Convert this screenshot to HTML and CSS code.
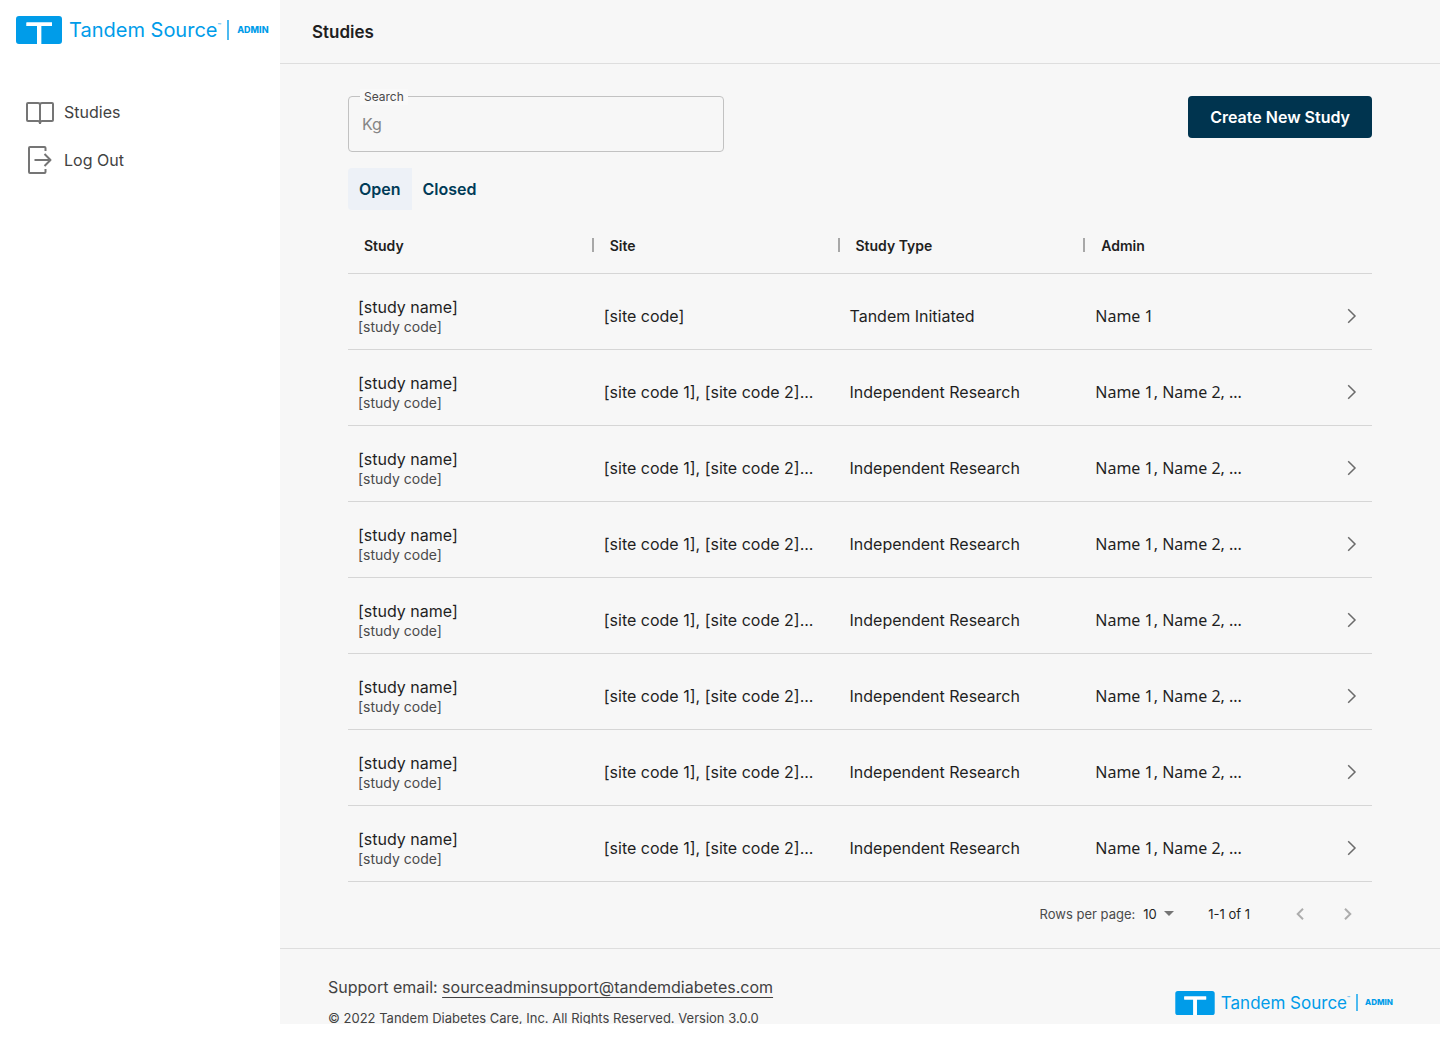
FILE: index.html
```
<!DOCTYPE html>
<html lang="en">
<head>
<meta charset="utf-8">
<meta name="viewport" content="width=device-width, initial-scale=1">
<title>Studies</title>
<link rel="stylesheet" href="styles.css">
</head>
<body>
<svg class="sprite" aria-hidden="true">
  <symbol id="mark" viewBox="0 0 46 28">
    <path fill="#009ce9" fill-rule="evenodd" d="M3 0H43a3 3 0 0 1 3 3V25a3 3 0 0 1-3 3H25.200V10H36V6.500H10.500V10H21V28H3a3 3 0 0 1-3-3V3a3 3 0 0 1 3-3z"/>
    <path fill="#fff" d="M10.500 6.500H36V10H25.200V28H21V10H10.500z"/>
  </symbol>
  <symbol id="chevron" viewBox="0 0 10 16">
    <path d="M1.200 1.200L8 8L1.200 14.800" fill="none" stroke="#6b6b6b" stroke-width="1.500"/>
  </symbol>
</svg>
<div class="layout">
  <aside class="sidebar">
    <a class="logo" href="#">
      <svg class="logo-mark" aria-hidden="true"><use href="#mark"/></svg>
      <span class="logo-name">Tandem Source<sup class="logo-tm">™</sup></span>
      <span class="logo-role">ADMIN</span>
    </a>
    <nav class="nav">
      <a class="nav-link" href="#">
        <svg width="32" height="32" viewBox="0 0 32 32" fill="none" stroke="#757575" stroke-width="2" stroke-linejoin="round" aria-hidden="true"><path d="M16 9c0-1-1-2-2-2H4a1 1 0 0 0-1 1v16a1 1 0 0 0 1 1h10c1 0 2 1 2 2.700M16 9c0-1 1-2 2-2h10a1 1 0 0 1 1 1v16a1 1 0 0 1-1 1H18c-1 0-2 1-2 2.700M16 8v20"/></svg>
        Studies
      </a>
      <a class="nav-link" href="#">
        <svg width="32" height="32" viewBox="0 0 32 32" fill="none" stroke="#757575" stroke-width="2" stroke-linejoin="round" aria-hidden="true"><path d="M21.500 7V4a1 1 0 0 0-1-1H6a1 1 0 0 0-1 1v24a1 1 0 0 0 1 1h14.500a1 1 0 0 0 1-1v-3M10.500 16H26.500M20.500 10l6 6-6 6"/></svg>
        Log Out
      </a>
    </nav>
  </aside>
  <div class="page">
    <header class="topbar"><h1 class="title">Studies</h1></header>
    <main class="content">
      <div class="toolbar">
        <div class="field">
          <label class="field-label" for="search">Search</label>
          <input class="field-input" id="search" type="text" placeholder="Kg">
        </div>
        <button class="create" type="button">Create New Study</button>
      </div>
      <div class="tabs">
        <button class="tab tab-active" type="button" aria-pressed="true">Open</button>
        <button class="tab" type="button" aria-pressed="false">Closed</button>
      </div>
      <table class="studies">
        <colgroup><col class="col"><col class="col"><col class="col"><col></colgroup>
        <thead><tr><th>Study</th><th>Site</th><th>Study Type</th><th>Admin</th></tr></thead>
        <tbody>
          <tr><td class="study">[study name]<small class="code">[study code]</small></td><td>[site code]</td><td>Tandem Initiated</td><td><div class="admin">Name 1<button class="open" type="button" aria-label="Open study"><svg width="10" height="16" aria-hidden="true"><use href="#chevron"/></svg></button></div></td></tr>
          <tr><td class="study">[study name]<small class="code">[study code]</small></td><td>[site code 1], [site code 2]...</td><td>Independent Research</td><td><div class="admin">Name 1, Name 2, ...<button class="open" type="button" aria-label="Open study"><svg width="10" height="16" aria-hidden="true"><use href="#chevron"/></svg></button></div></td></tr>
          <tr><td class="study">[study name]<small class="code">[study code]</small></td><td>[site code 1], [site code 2]...</td><td>Independent Research</td><td><div class="admin">Name 1, Name 2, ...<button class="open" type="button" aria-label="Open study"><svg width="10" height="16" aria-hidden="true"><use href="#chevron"/></svg></button></div></td></tr>
          <tr><td class="study">[study name]<small class="code">[study code]</small></td><td>[site code 1], [site code 2]...</td><td>Independent Research</td><td><div class="admin">Name 1, Name 2, ...<button class="open" type="button" aria-label="Open study"><svg width="10" height="16" aria-hidden="true"><use href="#chevron"/></svg></button></div></td></tr>
          <tr><td class="study">[study name]<small class="code">[study code]</small></td><td>[site code 1], [site code 2]...</td><td>Independent Research</td><td><div class="admin">Name 1, Name 2, ...<button class="open" type="button" aria-label="Open study"><svg width="10" height="16" aria-hidden="true"><use href="#chevron"/></svg></button></div></td></tr>
          <tr><td class="study">[study name]<small class="code">[study code]</small></td><td>[site code 1], [site code 2]...</td><td>Independent Research</td><td><div class="admin">Name 1, Name 2, ...<button class="open" type="button" aria-label="Open study"><svg width="10" height="16" aria-hidden="true"><use href="#chevron"/></svg></button></div></td></tr>
          <tr><td class="study">[study name]<small class="code">[study code]</small></td><td>[site code 1], [site code 2]...</td><td>Independent Research</td><td><div class="admin">Name 1, Name 2, ...<button class="open" type="button" aria-label="Open study"><svg width="10" height="16" aria-hidden="true"><use href="#chevron"/></svg></button></div></td></tr>
          <tr><td class="study">[study name]<small class="code">[study code]</small></td><td>[site code 1], [site code 2]...</td><td>Independent Research</td><td><div class="admin">Name 1, Name 2, ...<button class="open" type="button" aria-label="Open study"><svg width="10" height="16" aria-hidden="true"><use href="#chevron"/></svg></button></div></td></tr>
        </tbody>
      </table>
      <div class="pager">
        <label class="pager-label" for="rows">Rows per page:</label>
        <div class="pager-size">
          <select class="pager-select" id="rows"><option>10</option><option>25</option><option>50</option></select>
          <svg class="caret" width="10" height="5" viewBox="0 0 10 5" aria-hidden="true"><path d="M0 0H10L5 5z" fill="#757575"/></svg>
        </div>
        <span class="pager-range">1-1 of 1</span>
        <div class="pager-nav">
          <button class="step" type="button" aria-label="Previous page"><svg width="8" height="12" viewBox="0 0 8 12" fill="none" stroke="#adadad" stroke-width="2" aria-hidden="true"><path d="M7 .7L1.700 6L7 11.300"/></svg></button>
          <button class="step" type="button" aria-label="Next page"><svg width="8" height="12" viewBox="0 0 8 12" fill="none" stroke="#adadad" stroke-width="2" aria-hidden="true"><path d="M1 .7L6.300 6L1 11.300"/></svg></button>
        </div>
      </div>
    </main>
    <footer class="footer">
      <div>
        <p class="support">Support email: <a class="mail" href="mailto:sourceadminsupport@tandemdiabetes.com">sourceadminsupport@tandemdiabetes.com</a></p>
        <p class="legal">© 2022 Tandem Diabetes Care, Inc. All Rights Reserved. Version 3.0.0</p>
      </div>
      <div class="logo logo-small">
        <svg class="logo-mark" aria-hidden="true"><use href="#mark"/></svg>
        <span class="logo-name">Tandem Source<sup class="logo-tm">™</sup></span>
        <span class="logo-role">ADMIN</span>
      </div>
    </footer>
  </div>
</div>
</body>
</html>
```
FILE: styles.css
```
* { box-sizing: border-box; }

body {
  margin: 0;
  background: #fff;
  color: #1f1f1f;
  font: 16px/24px Inter, "Liberation Sans", sans-serif;
}

button, input, select { font: inherit; color: inherit; }

button {
  padding: 0;
  border: 0;
  background: none;
  cursor: pointer;
}

svg { flex: none; }

.sprite {
  position: absolute;
  width: 0;
  height: 0;
}

.layout {
  display: grid;
  grid-template-columns: 280px minmax(0, 1fr);
}

.sidebar { padding: 16px 12px 16px 16px; }

.logo {
  display: flex;
  align-items: center;
  color: #009ce9;
  text-decoration: none;
  white-space: nowrap;
}

.logo-mark { width: 46px; height: 28px; }

.logo-name {
  margin-left: 7px;
  font: 400 20px/28px Inter, sans-serif;
}

.logo-tm {
  font-size: 6px;
  line-height: 0;
  vertical-align: 9px;
}

.logo-role {
  margin-left: 6px;
  padding-left: 8px;
  border-left: 2px solid #4dbaf0;
  font: 800 9px/20px Inter, sans-serif;
}

.logo-small .logo-mark { width: 40px; height: 24px; }
.logo-small .logo-name { margin-left: 6px; font-size: 17px; }
.logo-small .logo-tm { font-size: 5px; }
.logo-small .logo-role { padding-left: 7px; font-size: 8px; line-height: 17px; }

.nav {
  display: grid;
  gap: 16px;
  padding: 52px 8px 0;
}

.nav-link {
  display: flex;
  align-items: center;
  gap: 8px;
  color: #424242;
  text-decoration: none;
}

.page { background: #f7f7f7; }

.topbar {
  display: flex;
  align-items: center;
  height: 64px;
  padding: 0 32px;
  border-bottom: 1px solid #dedede;
}

.title {
  margin: 0;
  font-size: 17px;
  font-weight: 600;
}

.content { padding: 32px 68px 0; }

.toolbar {
  display: flex;
  justify-content: space-between;
  align-items: flex-start;
}

.field { position: relative; }

.field-label {
  position: absolute;
  top: -7px;
  left: 12px;
  padding: 0 4px;
  background: #f9f9f9;
  color: #4a4a4a;
  font-size: 12px;
  line-height: 16px;
}

.field-input {
  display: block;
  width: 376px;
  height: 56px;
  padding: 0 13px;
  border: 1px solid #c2c2c2;
  border-radius: 4px;
  background: transparent;
}

.field-input::placeholder { color: #858585; opacity: 1; }

.create {
  padding: 9px 22px;
  border-radius: 4px;
  background: #00344f;
  color: #fff;
  font-weight: 600;
}

.tabs { display: flex; margin-top: 16px; }

.tab {
  height: 42px;
  padding: 0 11px;
  color: #003b57;
  font-weight: 600;
}

.tab-active {
  border-radius: 4px 0 0 4px;
  background: #edf1f7;
}

.studies {
  width: 100%;
  margin-top: 8px;
  border-collapse: collapse;
  table-layout: fixed;
}

.col { width: 24%; }

th {
  height: 55px;
  padding: 1px 16px 0;
  border-bottom: 1px solid #d6d6d6;
  background: linear-gradient(#a8a8a8, #a8a8a8) right center / 2px 14px no-repeat;
  font-size: 14px;
  font-weight: 600;
  text-align: left;
}

th:last-child { background: none; }

td {
  height: 76px;
  padding: 10px 11px 0 10px;
  border-bottom: 1px solid #d6d6d6;
  white-space: nowrap;
}

.study { padding-top: 12px; line-height: 20px; }

.code {
  display: block;
  color: #4a4a4a;
  font-size: 14px;
}

.admin {
  display: flex;
  align-items: center;
  justify-content: space-between;
  font-family: "Noto Sans", sans-serif;
}

.open { display: flex; padding: 0 4px; }

.pager {
  display: flex;
  align-items: center;
  justify-content: flex-end;
  height: 66px;
  padding: 0 20px 2px 0;
  font-size: 13px;
}

.pager-label { color: #4a4a4a; }

.pager-size {
  display: flex;
  align-items: center;
  margin: 0 34px 0 8px;
}

.pager-select {
  width: 31px;
  margin-right: -10px;
  padding: 0;
  border: 0;
  background: none;
  appearance: none;
}

.caret { pointer-events: none; }

.pager-nav { display: flex; gap: 40px; margin-left: 46px; }

.step { display: flex; }

.footer {
  display: flex;
  justify-content: space-between;
  padding: 26px 47px 0 48px;
  border-top: 1px solid #dedede;
  color: #424242;
}

.support, .legal { margin: 0; }

.mail {
  color: inherit;
  text-underline-offset: 4px;
}

.legal {
  margin-top: 13px;
  font-size: 13px;
  line-height: 12px;
}

.logo-small { height: 24px; margin-top: 16px; }
```
